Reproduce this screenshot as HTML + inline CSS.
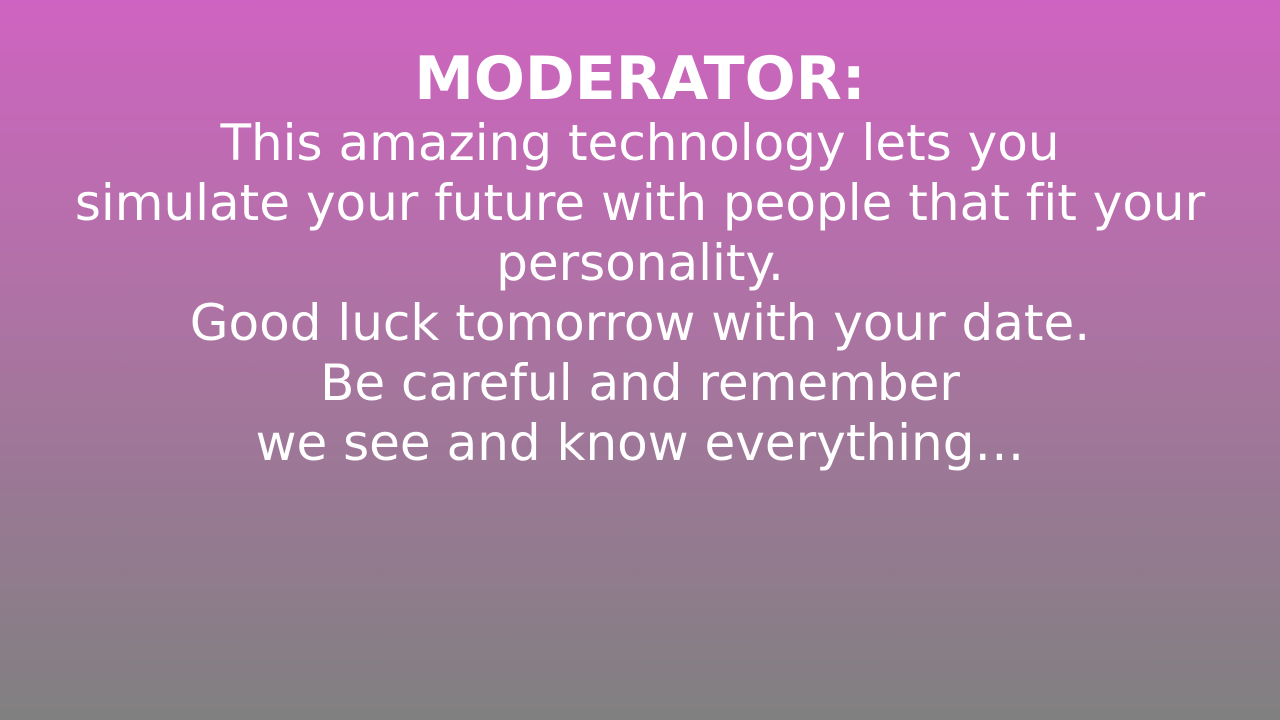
<!DOCTYPE html>
<html><head><meta charset="utf-8"><style>
html,body{margin:0;padding:0}
body{width:1280px;height:720px;overflow:hidden;background:linear-gradient(to bottom,#cf63c1 0%,#b072a6 40%,#808080 100%);font-family:"DejaVu Sans","Liberation Sans",sans-serif;color:#fff;position:relative;font-variant-ligatures:none}
.t{position:absolute;left:0;width:1280px;text-align:center;top:44px;font-size:60px;font-weight:bold;line-height:70px}
.b{position:absolute;left:0;width:1280px;text-align:center;top:113px;font-size:50px;line-height:60px}
</style></head><body>
<div class="t">MODERATOR:</div>
<div class="b">This amazing technology lets you<br>simulate your future with people that fit your<br>personality.<br>Good luck tomorrow with your date.<br>Be careful and remember<br>we see and know everything…</div>
</body></html>
